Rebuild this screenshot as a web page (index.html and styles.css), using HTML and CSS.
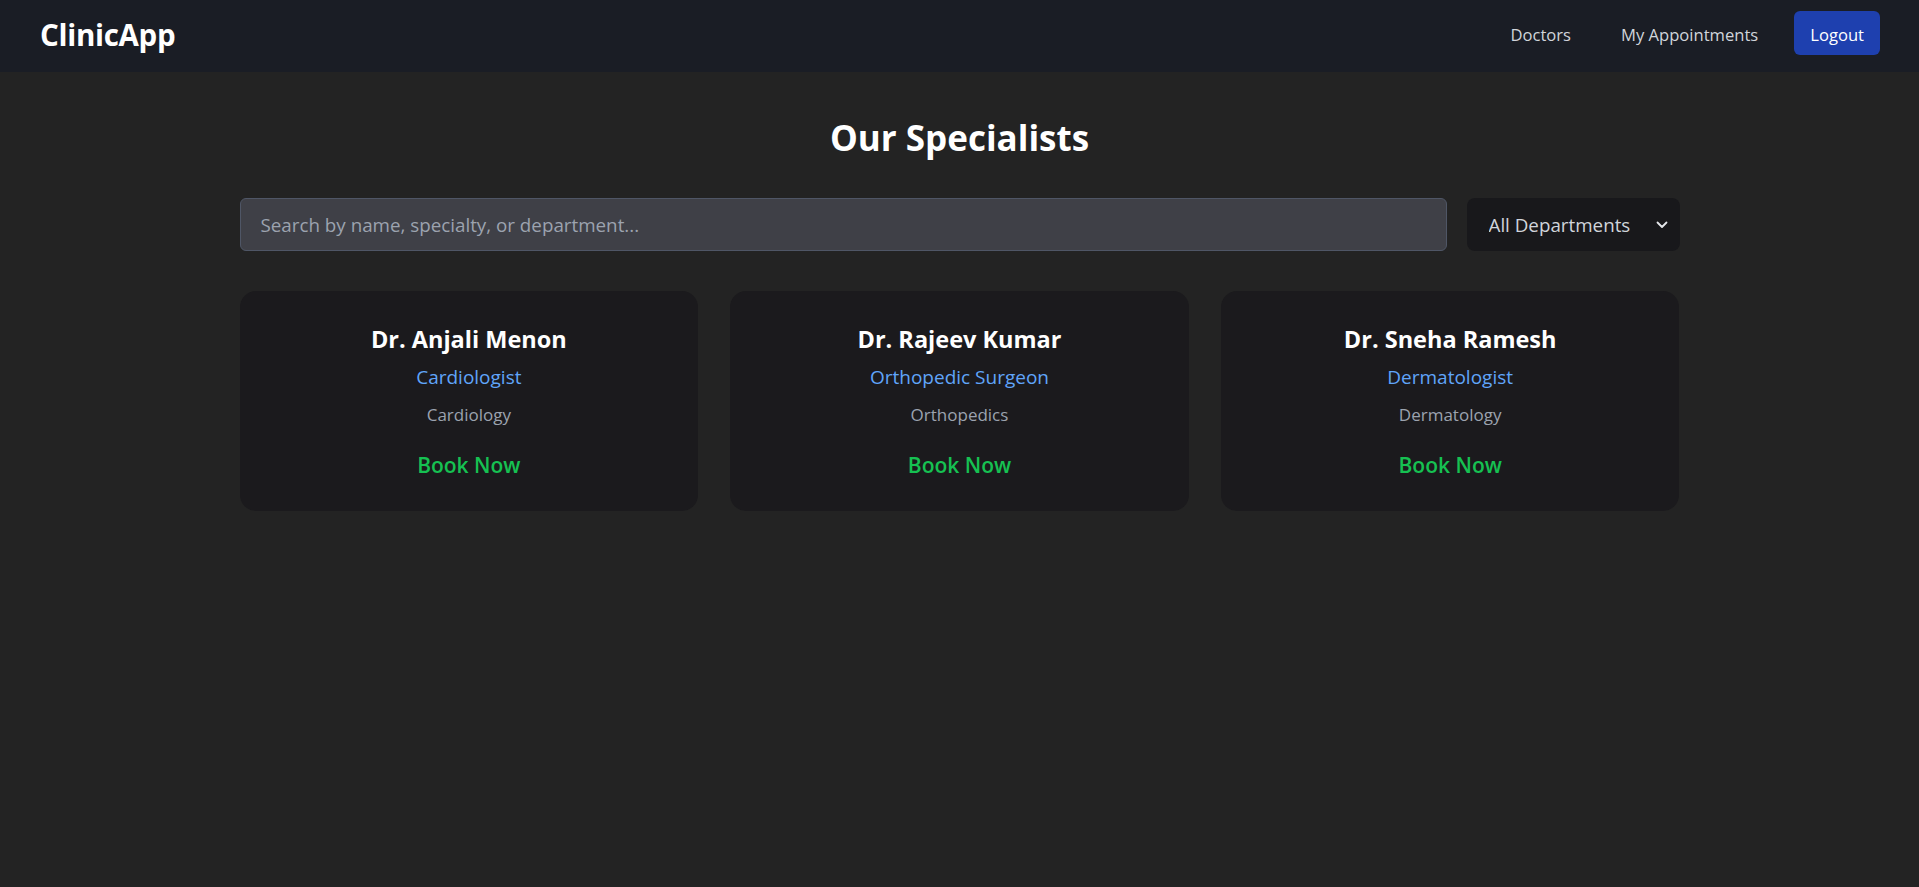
FILE: index.html
```html
<!DOCTYPE html>
<html lang="en">
<head>
<meta charset="utf-8">
<title>ClinicApp</title>
<link rel="stylesheet" href="styles.css">
</head>
<body>
<nav class="navbar">
  <a class="brand" href="#">ClinicApp</a>
  <div class="nav-links">
    <a class="nav-link" href="#">Doctors</a>
    <a class="nav-link" href="#">My Appointments</a>
    <button class="logout">Logout</button>
  </div>
</nav>
<main class="container">
  <h1 class="title">Our Specialists</h1>
  <div class="filters">
    <input class="search" type="text" placeholder="Search by name, specialty, or department...">
    <div class="select-wrap">
      <select class="select">
        <option>All Departments</option>
      </select>
      <svg class="chevron" width="12" height="8" viewBox="0 0 12 8" aria-hidden="true"><path d="M1.5 1.5 L6 6 L10.5 1.5" fill="none" stroke="#e5e7eb" stroke-width="1.8" stroke-linecap="round" stroke-linejoin="round"/></svg>
    </div>
  </div>
  <div class="grid">
    <div class="card">
      <h2 class="name">Dr. Anjali Menon</h2>
      <p class="specialty">Cardiologist</p>
      <p class="dept">Cardiology</p>
      <a class="book" href="#">Book Now</a>
    </div>
    <div class="card">
      <h2 class="name">Dr. Rajeev Kumar</h2>
      <p class="specialty">Orthopedic Surgeon</p>
      <p class="dept">Orthopedics</p>
      <a class="book" href="#">Book Now</a>
    </div>
    <div class="card">
      <h2 class="name">Dr. Sneha Ramesh</h2>
      <p class="specialty">Dermatologist</p>
      <p class="dept">Dermatology</p>
      <a class="book" href="#">Book Now</a>
    </div>
  </div>
</main>
</body>
</html>
```
FILE: styles.css
```css
* { box-sizing: border-box; }
html, body { margin: 0; padding: 0; }
body {
  background: #232323;
  font-family: "Open Sans", "Noto Sans", sans-serif;
  color: #fff;
  min-height: 887px;
}
a { text-decoration: none; }

.navbar {
  height: 72px;
  background: #1a1d25;
  display: flex;
  align-items: center;
  justify-content: space-between;
  padding: 0 39px 6px 40px;
}
.brand {
  color: #fff;
  font-size: 29.5px;
  font-weight: 700;
  letter-spacing: -0.3px;
  padding-top: 2px;
}
.nav-links {
  display: flex;
  align-items: center;
}
.nav-link {
  color: #d1d5db;
  font-size: 16.6px;
  margin-right: 50px;
  padding-top: 2px;
}
.nav-link + .nav-link { margin-right: 36px; }
.logout {
  background: #1e40af;
  color: #fff;
  border: none;
  border-radius: 6px;
  height: 44px;
  padding: 3px 16px 0;
  font-family: inherit;
  font-size: 16.6px;
}

.container {
  width: 1440px;
  margin: 0 auto;
  padding-top: 42px;
}
.title {
  margin: 0;
  text-align: center;
  font-size: 35px;
  line-height: 48px;
  font-weight: 700;
}
.filters {
  display: flex;
  gap: 20px;
  margin-top: 36px;
}
.search {
  flex: 1;
  height: 53px;
  background: #3f4047;
  border: 1px solid #4f5666;
  border-radius: 6px;
  padding: 0 20px;
  font-family: inherit;
  font-size: 18.8px;
  color: #e5e7eb;
  outline: none;
}
.search::placeholder { color: #9ca3af; }
.select-wrap {
  position: relative;
  width: 213px;
}
.select {
  appearance: none;
  -webkit-appearance: none;
  width: 100%;
  height: 53px;
  background: #18181b;
  border: none;
  border-radius: 8px;
  padding: 0 22px;
  font-family: inherit;
  font-size: 18.8px;
  color: #d1d5db;
  outline: none;
}
.chevron {
  position: absolute;
  right: 12px;
  top: 23px;
  pointer-events: none;
}

.grid {
  display: grid;
  grid-template-columns: repeat(3, 1fr);
  gap: 32px;
  margin-top: 40px;
}
.card {
  background: #1b1a1d;
  border-radius: 16px;
  padding: 32px;
  text-align: center;
  display: flex;
  flex-direction: column;
  align-items: center;
}
.name {
  margin: 0;
  font-size: 23.5px;
  line-height: 32px;
  font-weight: 700;
}
.specialty {
  margin: 8px 0 0;
  font-size: 19px;
  line-height: 28px;
  color: #60a5fa;
}
.dept {
  margin: 12px 0 0;
  font-size: 17px;
  line-height: 24px;
  color: #9ca3af;
}
.book {
  margin-top: 24px;
  font-size: 21px;
  line-height: 28px;
  font-weight: 600;
  color: #16c152;
}
```
